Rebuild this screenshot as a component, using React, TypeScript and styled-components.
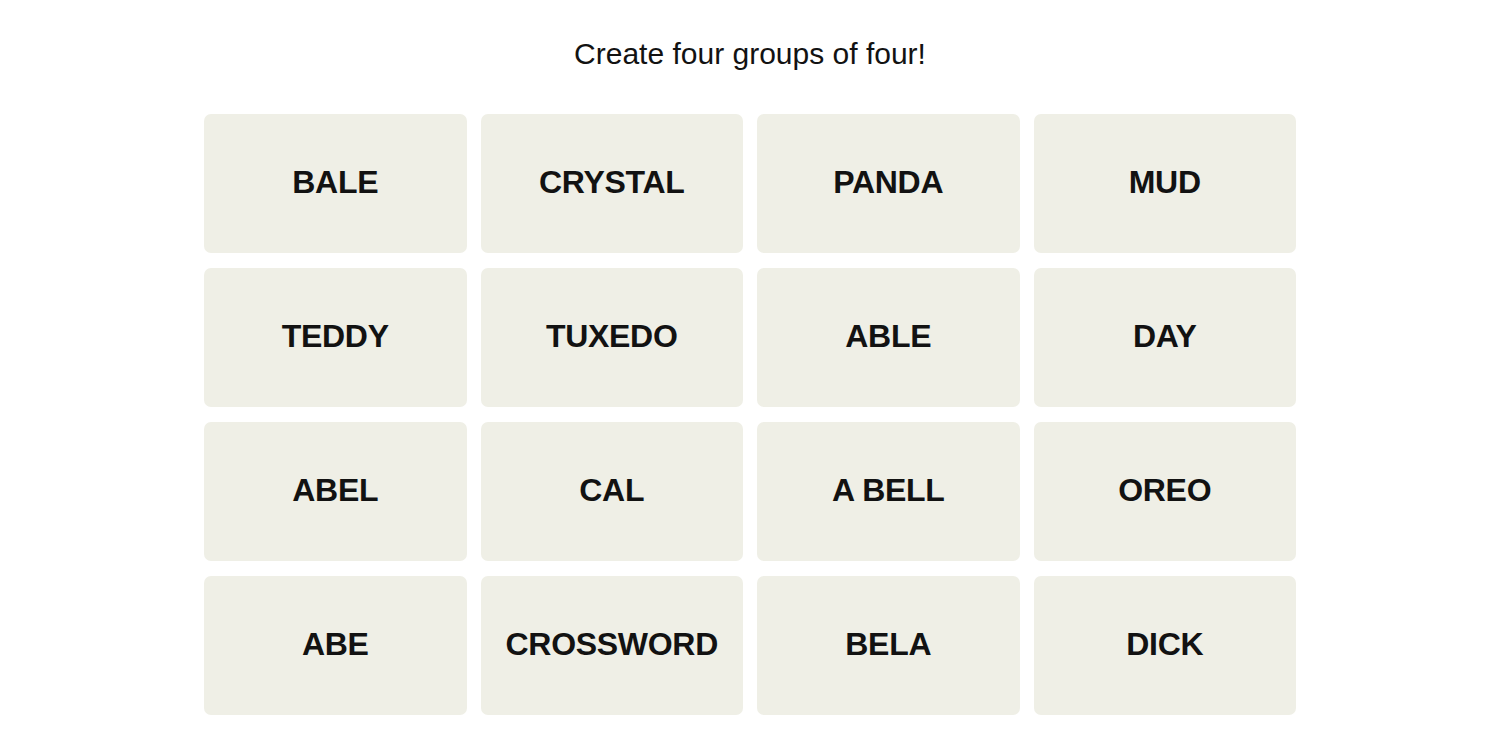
import React from "react";
import styled, { createGlobalStyle } from "styled-components";

const GlobalStyle = createGlobalStyle`
  body {
    margin: 0;
    background: #ffffff;
    font-family: "Liberation Sans", Arial, sans-serif;
  }
`;

const Page = styled.main`
  display: flex;
  flex-direction: column;
  align-items: center;
  padding-top: 37px;
`;

const Title = styled.h2`
  margin: 0;
  font-size: 30px;
  line-height: 34px;
  font-weight: 400;
  color: #121212;
`;

const Board = styled.div`
  margin-top: 43px;
  width: 1092px;
  display: grid;
  grid-template-columns: repeat(4, 1fr);
  grid-auto-rows: 139px;
  column-gap: 14px;
  row-gap: 15px;
`;

const Tile = styled.button`
  border: none;
  border-radius: 7px;
  padding: 0 0 3px;
  background: #efefe6;
  color: #121212;
  font-family: "Liberation Sans", Arial, sans-serif;
  font-weight: 700;
  font-size: 32px;
  letter-spacing: -0.3px;
  text-transform: uppercase;
  display: flex;
  align-items: center;
  justify-content: center;
  cursor: pointer;
`;

const words = [
  "BALE", "CRYSTAL", "PANDA", "MUD",
  "TEDDY", "TUXEDO", "ABLE", "DAY",
  "ABEL", "CAL", "A BELL", "OREO",
  "ABE", "CROSSWORD", "BELA", "DICK",
];

const App: React.FC = () => {
  return (
    <>
      <GlobalStyle />
      <Page>
        <Title>Create four groups of four!</Title>
        <Board>
          {words.map((w) => (
            <Tile key={w}>{w}</Tile>
          ))}
        </Board>
      </Page>
    </>
  );
};

export default App;
